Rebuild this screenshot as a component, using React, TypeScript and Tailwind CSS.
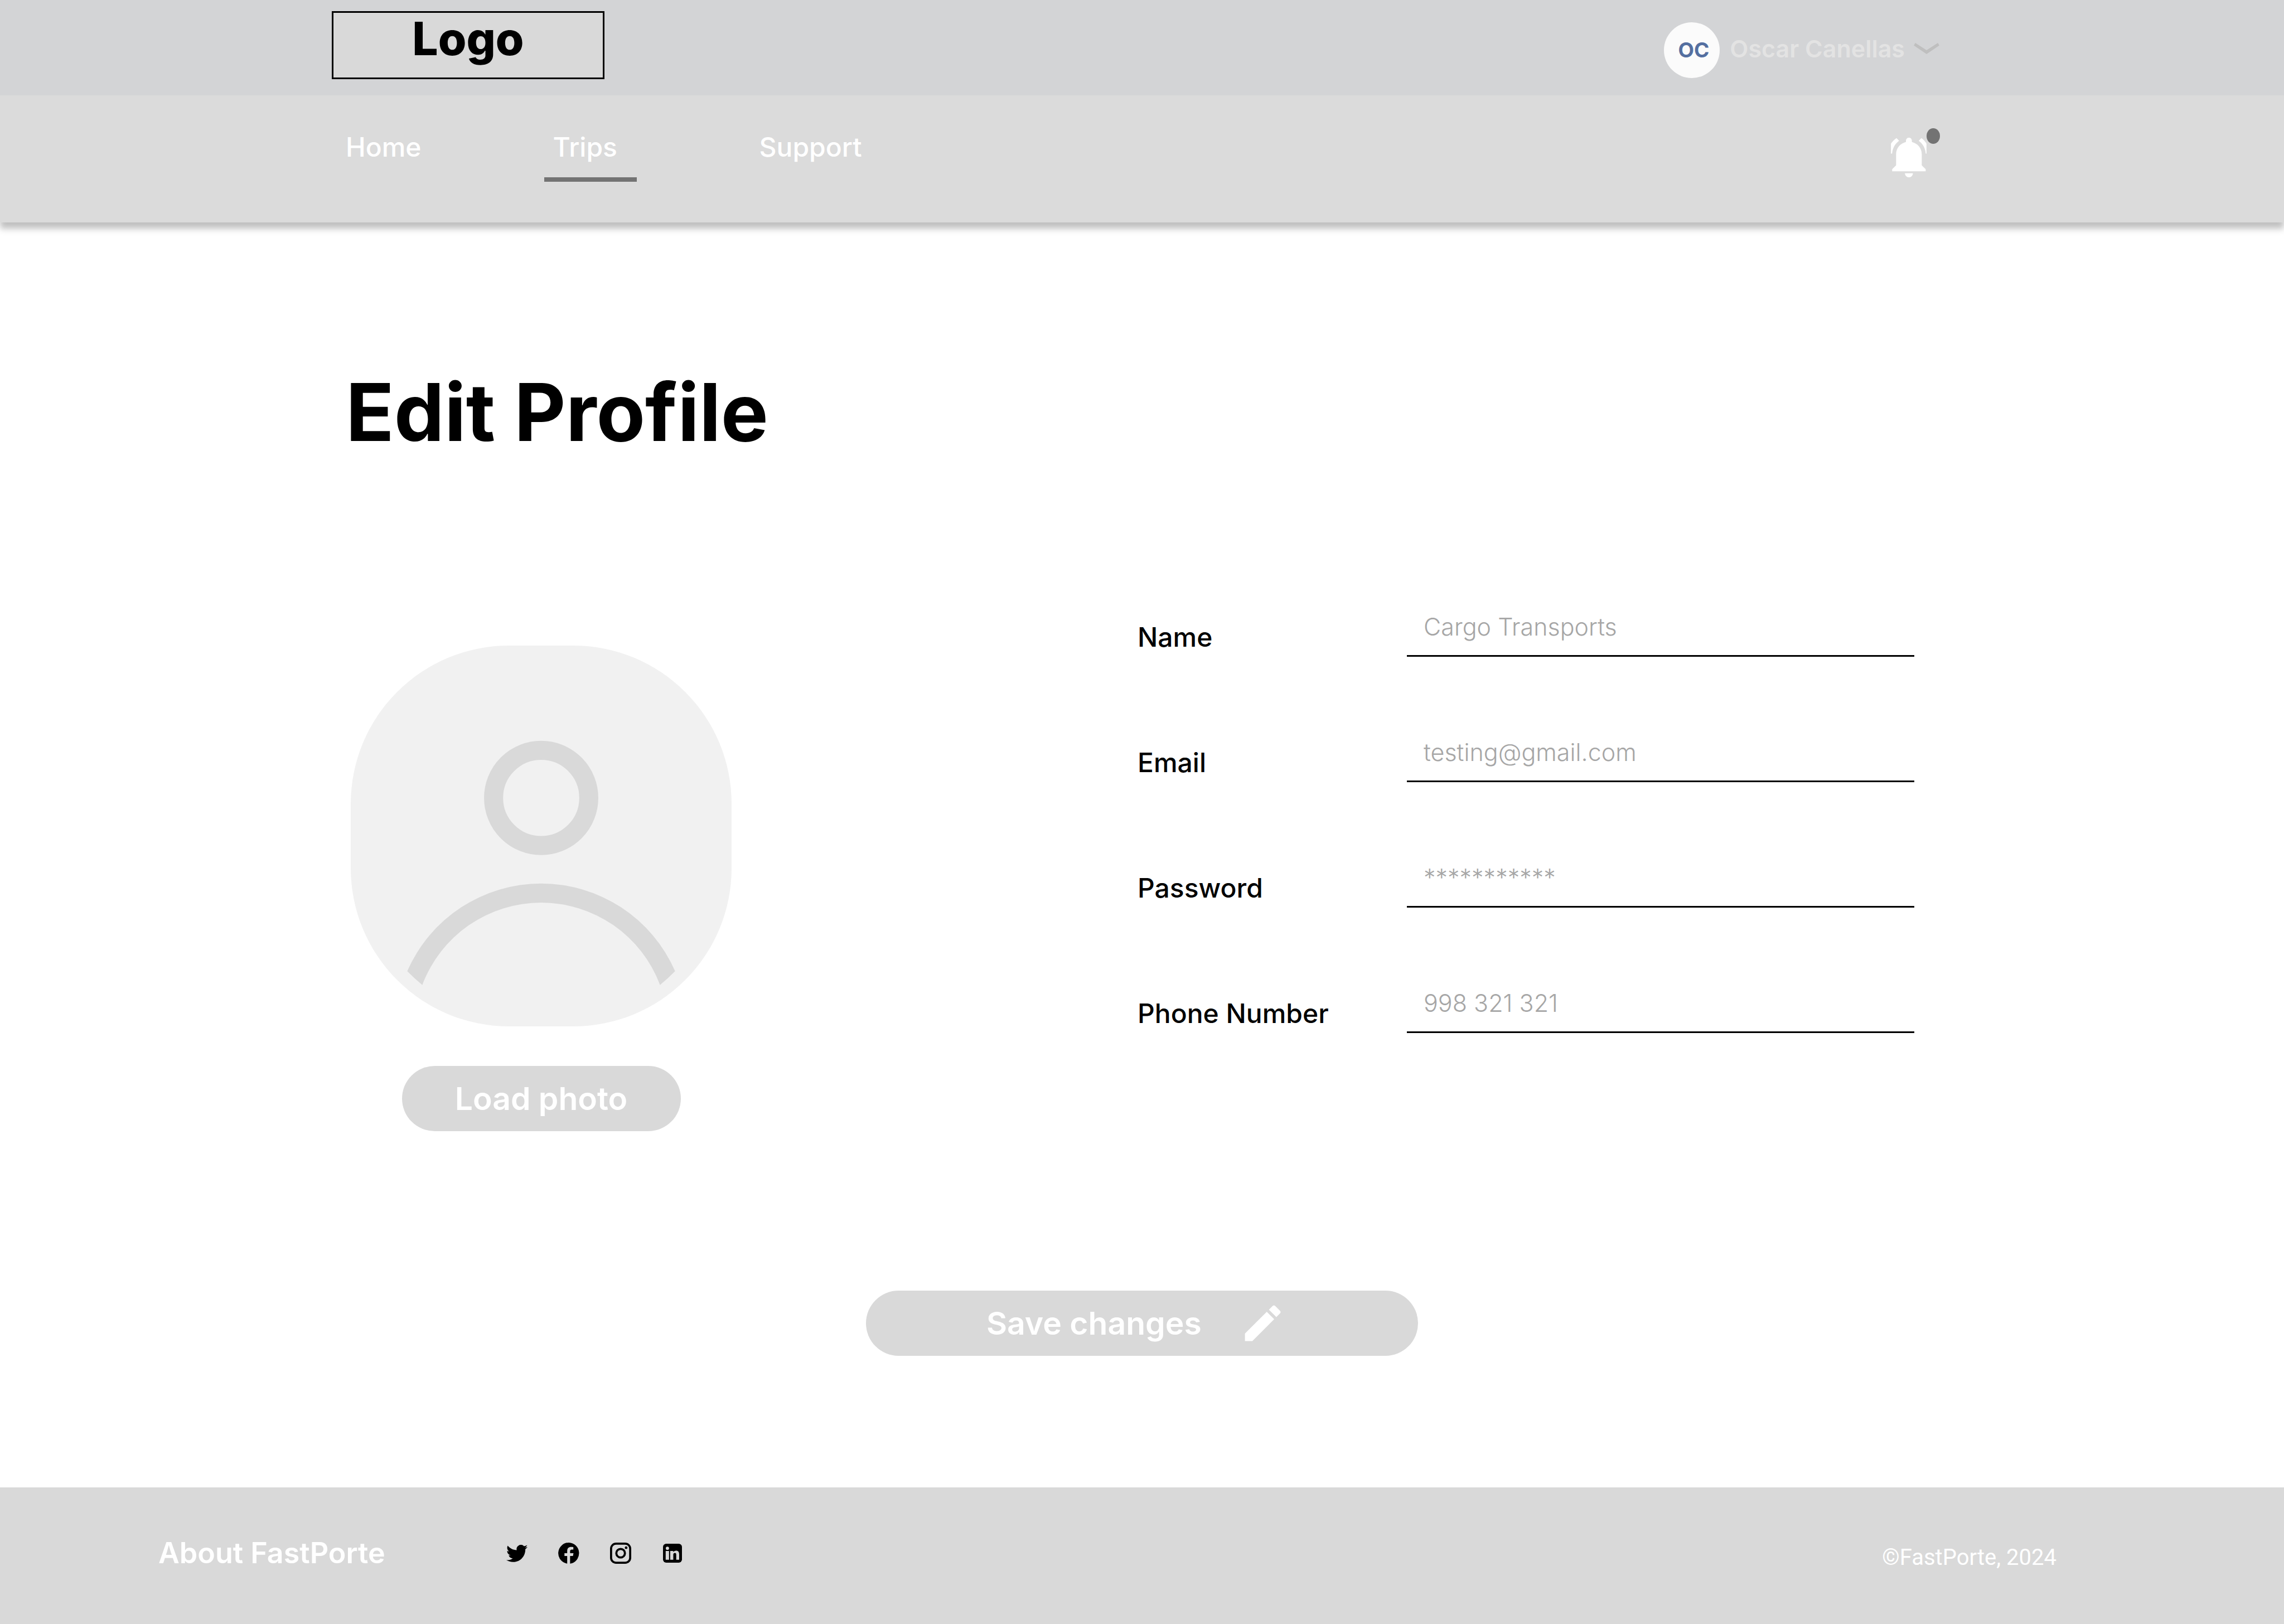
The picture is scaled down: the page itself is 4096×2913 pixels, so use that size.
import { MdEdit } from "react-icons/md";

const NAV_LINKS = [
  { label: "Home", active: false },
  { label: "Trips", active: true },
  { label: "Support", active: false },
];

const FIELDS = [
  { id: "name", label: "Name", type: "text", placeholder: "Cargo Transports" },
  { id: "email", label: "Email", type: "email", placeholder: "testing@gmail.com" },
  { id: "password", label: "Password", type: "password", placeholder: "***********" },
  { id: "phone", label: "Phone Number", type: "tel", placeholder: "998 321 321" },
];

function ChevronIcon() {
  return (
    <svg viewBox="0 0 64 28" className="h-5 w-[46px] shrink-0 fill-[#bfbfbf]" aria-hidden="true">
      <path d="M3.7 0 32 18.3 60.3 0 64 6.3 32 28 0 6.3z" />
    </svg>
  );
}

function BellIcon() {
  return (
    <svg viewBox="0 0 270 301" className="h-[71px] w-16 fill-white" aria-hidden="true">
      <path d="M114 33V22a22.5 22.5 0 0 1 45 0v11c44 10 75 47 75 92v85l30 29v16H9v-16l30-29v-85c0-45 31-82 75-92z" />
      <path d="M106 270h61c0 17-13.500 31-30.500 31S106 287 106 270z" />
      <path d="M42 3 62 23C30 47 11 81 9 121H0V46C10 29 25 15 42 3z" />
      <path d="M231 3 211 23c32 24 51 58 53 98h6V46C261 29 248 15 231 3z" />
    </svg>
  );
}

function PersonIcon() {
  return (
    <svg viewBox="0 0 240 240" className="size-full" aria-hidden="true">
      <circle cx="120" cy="96" r="30" fill="none" stroke="#d9d9d9" strokeWidth="12" />
      <path
        d="M35.600 205.200A92.100 92.100 0 0 1 204.400 205.200Q199.900 209.800 194.900 213.900A80 80 0 0 0 45.100 213.900Q40.100 209.800 35.600 205.200z"
        fill="#d9d9d9"
      />
    </svg>
  );
}

function TwitterIcon() {
  return (
    <svg viewBox="0 2.250 24 19.600" className="h-[31px] w-[38px]" aria-hidden="true">
      <path d="M23.953 4.570a10 10 0 0 1-2.825.775 4.958 4.958 0 0 0 2.563-2.823c-1.151.655-2.405 1.059-3.527 1.284a4.920 4.920 0 0 0-8.384 4.482C7.690 8.095 4.067 6.130 1.640 3.162a4.822 4.822 0 0 0-.666 2.475c0 1.710.870 3.213 2.188 4.096a4.904 4.904 0 0 1-2.228-.616v.060a4.923 4.923 0 0 0 3.946 4.827 4.996 4.996 0 0 1-2.212.085 4.936 4.936 0 0 0 4.604 3.417 9.867 9.867 0 0 1-6.102 2.105c-.390 0-.779-.023-1.170-.067a13.995 13.995 0 0 0 7.557 2.209c9.053 0 13.998-7.496 13.998-13.985 0-.210 0-.420-.015-.630A9.935 9.935 0 0 0 24 4.590z" />
    </svg>
  );
}

function FacebookIcon() {
  return (
    <svg viewBox="0 0 162 162" className="size-[38px]" aria-hidden="true">
      <path d="M81 0a81 81 0 0 1 10 161v-59h22l4-21H91V66c0-9 5-13 13-13h12V34c-3-.600-11-1-17-1-18 0-30 10-30 31v17H48v21h21v59A81 81 0 0 1 81 0z" />
    </svg>
  );
}

function InstagramIcon() {
  return (
    <svg viewBox="0 0 162 162" className="size-[38px]" aria-hidden="true">
      <rect x="8" y="8" width="146" height="146" rx="38" fill="none" stroke="#000" strokeWidth="16" />
      <circle cx="81" cy="81" r="33" fill="none" stroke="#000" strokeWidth="16" />
      <circle cx="123" cy="39" r="10" />
    </svg>
  );
}

function LinkedinIcon() {
  return (
    <svg viewBox="0 0 142 142" className="size-[34px]" aria-hidden="true">
      <rect width="142" height="142" rx="24" />
      <g fill="#d9d9d9">
        <circle cx="33" cy="34" r="12" />
        <path d="M20 54h25v66H20zM54 54h23v9c4-7 12-11 21-11 17 0 23 11 23 28v40H99V82c0-8-3-13-10-13s-12 5-12 13v38H54z" />
      </g>
    </svg>
  );
}

const SOCIALS = [
  { label: "Twitter", Icon: TwitterIcon },
  { label: "Facebook", Icon: FacebookIcon },
  { label: "Instagram", Icon: InstagramIcon },
  { label: "LinkedIn", Icon: LinkedinIcon },
];

function Header() {
  return (
    <header className="shadow-[0_11px_11px_rgba(0,0,0,0.25)]">
      <div className="flex h-[171px] items-start justify-between bg-[#d3d4d6] pr-[618px] pl-[595px]">
        <a
          href="#"
          className="mt-5 flex h-[122px] w-[489px] justify-center border-3 border-black bg-[#d9d9d9] text-[82px] leading-[93px] font-extrabold text-black"
        >
          Logo
        </a>
        <button type="button" className="mt-10 flex items-start gap-[18px]">
          <span className="flex size-[100px] items-center justify-center rounded-full bg-[#fbfbfb] pl-1.5 text-[37px] font-bold text-[#546fa0]">
            OC
          </span>
          <span className="flex h-[94px] items-center gap-4 text-[43px] font-semibold text-[#e3e3e3]">
            Oscar Canellas
            <ChevronIcon />
          </span>
        </button>
      </div>
      <div className="flex h-[228px] items-start justify-between bg-[#dbdbdb] pr-[617px] pl-[620px]">
        <nav className="flex gap-[220px] pt-[63px] text-[48px] leading-[60px] font-medium text-white">
          {NAV_LINKS.map(({ label, active }) => (
            <a
              key={label}
              href="#"
              aria-current={active ? "page" : undefined}
              className={active ? "w-[166px] border-b-8 border-[#737373] pb-6 pl-4" : ""}
            >
              {label}
            </a>
          ))}
        </nav>
        <button type="button" aria-label="Notifications" className="relative mt-[59px] flex size-[88px] items-end">
          <BellIcon />
          <span className="absolute top-0 right-0 h-7 w-6 rounded-[50%] bg-[#737373]" />
        </button>
      </div>
    </header>
  );
}

function ProfileForm() {
  return (
    <form id="profile-form" className="flex flex-1 flex-col pt-[254px] pr-[663px] pl-[620px]">
      <h1 className="text-[143px] leading-[172px] font-bold">Edit Profile</h1>
      <div className="mt-[248px] flex gap-[728px]">
        <div className="ml-[9px] flex w-[683px] shrink-0 flex-col items-center pt-[85px]">
          <div className="size-[683px] overflow-hidden rounded-[284px] bg-[#f1f1f1]">
            <PersonIcon />
          </div>
          <button
            type="button"
            className="mt-[71px] h-[117px] w-[500px] rounded-full bg-[#d9d9d9] text-[57px] font-semibold text-white"
          >
            Load photo
          </button>
        </div>
        <div className="flex flex-1 flex-col gap-[120px]">
          {FIELDS.map(({ id, label, type, placeholder }) => (
            <div key={id} className="flex items-end">
              <label htmlFor={id} className="w-[483px] shrink-0 text-[48px] leading-[70px] font-medium">
                {label}
              </label>
              <input
                id={id}
                type={type}
                placeholder={placeholder}
                className="h-[105px] min-w-0 flex-1 border-b-3 border-black bg-transparent pl-[30px] text-[43px] font-light text-[#a6a6a6] outline-none placeholder:text-[#a6a6a6]"
              />
            </div>
          ))}
        </div>
      </div>
    </form>
  );
}

export default function App() {
  return (
    <div className="flex min-h-screen flex-col bg-white font-['Inter',sans-serif] text-black">
      <Header />
      <main className="flex flex-1 flex-col">
        <ProfileForm />
        <div className="flex justify-center pb-[236px]">
          <button
            type="submit"
            form="profile-form"
            className="flex h-[117px] w-[990px] items-center gap-[67px] rounded-full bg-[#d9d9d9] pl-[216px] text-[57px] font-semibold text-white"
          >
            Save changes
            <MdEdit className="size-[85px]" aria-hidden="true" />
          </button>
        </div>
      </main>
      <footer className="flex h-[245px] items-start justify-between bg-[#d9d9d9] pt-[88px] pr-[408px] pl-[284px] text-white">
        <div className="flex h-[60px] items-center gap-[213px]">
          <a href="#" className="text-[52px] font-semibold">
            About FastPorte
          </a>
          <div className="flex gap-[47px]">
            {SOCIALS.map(({ label, Icon }) => (
              <a key={label} href="#" aria-label={label} className="flex size-[46px] items-center justify-center text-black">
                <Icon />
              </a>
            ))}
          </div>
        </div>
        <p className="font-['Roboto',sans-serif] text-[40px] leading-[76px]">©FastPorte, 2024</p>
      </footer>
    </div>
  );
}
